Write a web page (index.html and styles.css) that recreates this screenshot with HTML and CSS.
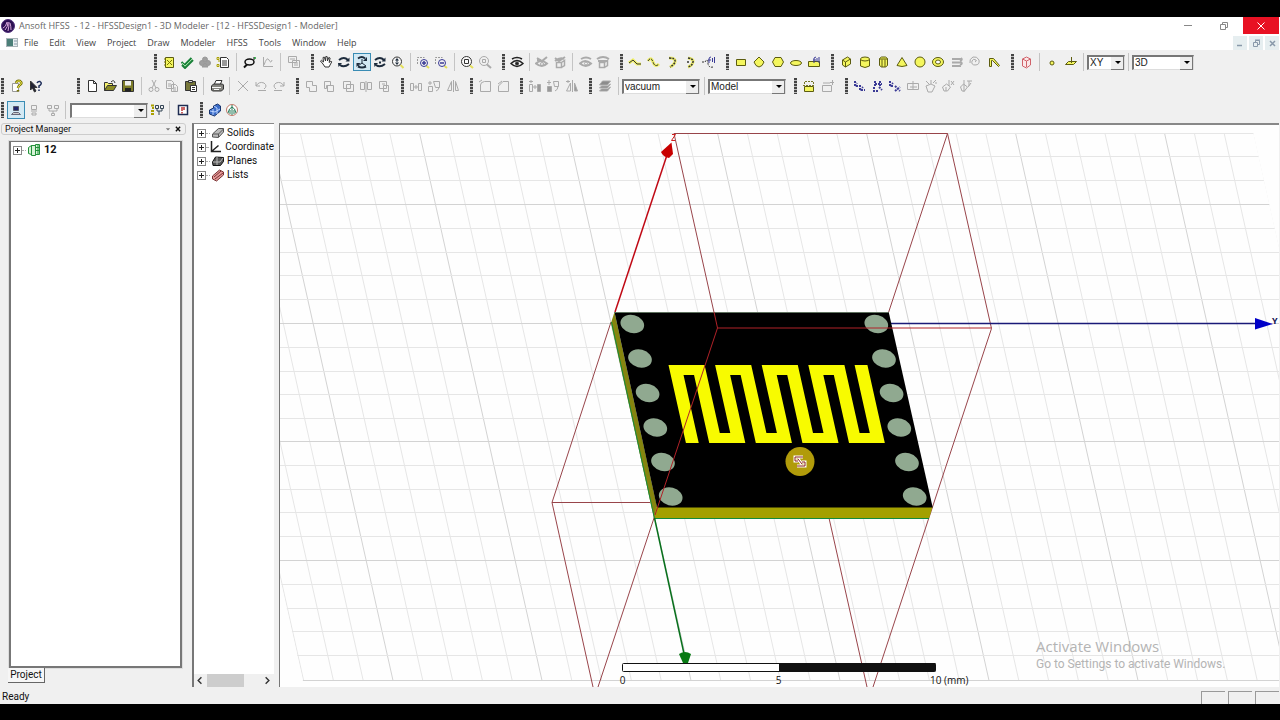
FILE: index.html
```html
<!DOCTYPE html>
<html lang="en">
<head>
<meta charset="utf-8">
<title>Ansoft HFSS</title>
<link rel="stylesheet" href="styles.css">
</head>
<body>
<div class="app">
  <header class="titlebar">
    <svg class="logo" viewBox="0 0 14 14"><circle cx="7" cy="7" r="6.500" fill="#2c1052" stroke="#52307c"/><path d="M2 9q3-1 4-6M4 11q3-3 3-8M7 12q1-4 1-9M10 11q0-4-1-7" stroke="#d9a8dc"/></svg>
    <h1>Ansoft HFSS&nbsp; - 12 - HFSSDesign1 - 3D Modeler - [12 - HFSSDesign1 - Modeler]</h1>
    <div class="winbtns">
      <button aria-label="Minimize"><svg viewBox="0 0 14 14"><path d="M2 6.500h8" stroke="#888"/></svg></button>
      <button aria-label="Restore"><svg viewBox="0 0 14 14"><path d="M2.500 5.500h5v5h-5zM4.500 5.500v-2h5v5h-2" stroke="#888"/></svg></button>
      <button class="close" aria-label="Close"><svg viewBox="0 0 14 14"><path d="M3.500 3.500l7 7M10.500 3.500l-7 7" stroke="#fff"/></svg></button>
    </div>
  </header>
  <nav class="menubar">
    <svg class="docicon" viewBox="0 0 14 14"><rect x="1.500" y="2.500" width="11" height="8" fill="#e8eef0" stroke="#a9b4b8"/><rect x="2" y="3" width="6" height="7" fill="#4b7f78" stroke="none"/><path d="M9 5h3M9 8h3" stroke="#89a"/></svg>
    <button>File</button><button>Edit</button><button>View</button><button>Project</button><button>Draw</button><button>Modeler</button><button>HFSS</button><button>Tools</button><button>Window</button><button>Help</button>
    <div class="mdibtns">
      <button aria-label="Minimize document"><svg viewBox="0 0 14 14"><path d="M4 9.500h5" stroke="#89a" stroke-width="1.500"/></svg></button>
      <button aria-label="Restore document"><svg viewBox="0 0 14 14"><path d="M4.500 6.500h4v4h-4zM6.500 6V4.500h4v4H9M6 4h5" stroke="#89a"/></svg></button>
      <button aria-label="Close document"><svg viewBox="0 0 14 14"><path d="M5 5l5 5M10 5l-5 5" stroke="#89a" stroke-width="1.500"/></svg></button>
    </div>
  </nav>

  <div class="bar row1">
    <div class="tools" role="toolbar" aria-label="HFSS">
      <i class="grip"></i>
      <button aria-label="Model"><svg viewBox="0 0 14 14"><path class="y" d="M3.500 2.500h8v10h-8z"/><path d="M5 5l5 5M10 5l-5 5M2 4h2M2 7h2M2 10h2" stroke="#777000"/></svg></button>
      <button aria-label="Validate"><svg viewBox="0 0 14 14"><path d="M1.500 7l3 3 7-7M2 10l3 3 8-8" stroke="#188038" stroke-width="2"/><path d="M2 8l3 3 7-7" stroke="#9ce0a0"/></svg></button>
      <button aria-label="Analyze all"><svg viewBox="0 0 14 14"><g fill="#a0a0a0" stroke="#999"><circle cx="7" cy="4.500" r="2.500"/><circle cx="4" cy="8" r="2.500"/><circle cx="10" cy="8" r="2.500"/><path d="M4 12h6l-3-4z"/></g></svg></button>
      <button aria-label="Notes"><svg viewBox="0 0 14 14"><path d="M4.500 2.500h6l2 2v8h-8z" fill="#fff"/><path d="M6 6h5M6 8h5M6 10h5"/><path d="M1 2.500h2v2H1zM2 6h2M1 9.500h2v2H1z" stroke="#aaa000"/></svg></button>
      <i class="sep"></i>
      <button aria-label="Solution data"><svg viewBox="0 0 14 14"><ellipse cx="6.500" cy="7" rx="4.500" ry="3" stroke="#111" stroke-width="1.500" fill="#eee"/><path d="M1 12.500l3-3" stroke="#111" stroke-width="2"/><path d="M11 2v3" stroke="#111"/><circle cx="12" cy="3" r="1" fill="#19a030" stroke="none"/></svg></button>
      <button aria-label="Report" class="off"><svg viewBox="0 0 14 14"><path d="M2.500 2v9.500H12M3 10q3-9 5-5t3 0"/></svg></button>
      <i class="sep"></i>
      <button aria-label="Copy image" class="off"><svg viewBox="0 0 14 14"><path d="M1.500 1.500h8v6h-8zM5.500 5.500h7v7h-7zM3 4h5M7 8h4M7 10h4"/></svg></button>
    </div>
    <div class="tools" role="toolbar" aria-label="View">
      <i class="grip"></i>
      <button aria-label="Pan"><svg viewBox="0 0 14 14"><path d="M4 9L1.500 6l1-.7L4.500 7 4 2.500l1.300-.4L6.500 6l.3-4.500 1.400.2L8.500 6l1.300-3.500 1.300.5-1 4.500 1.800-1.500.8.900L10 12H6z" fill="#fff"/></svg></button>
      <button aria-label="Rotate about model"><svg viewBox="0 0 14 14"><path class="rot" d="M2 5q5-4 9 0M3 10q4 3 9-1"/><path class="arw" d="M12.500 2.500v4h-4zM1 8l4 0-3.500 4z"/></svg></button>
      <button aria-label="Rotate about axis" class="on"><svg viewBox="0 0 14 14"><path class="rot" d="M3 3.500q4-3 7 0M3 11.500q4 2 8 0"/><path d="M7 4v4M7 8l-4 3M7 8l4 3" stroke="#1d2b3c"/><path class="arw" d="M12 2v4H8zM1.500 8h4l-4 4z"/></svg></button>
      <button aria-label="Rotate about screen"><svg viewBox="0 0 14 14"><path class="rot" d="M2 5q5-4 9 0M3 10q4 3 9-1"/><path class="arw" d="M12.500 2.500v4h-4zM1 8l4 0-3.500 4zM6 6.500h2v2H6z"/></svg></button>
      <button aria-label="Zoom dynamic"><svg viewBox="0 0 14 14"><path class="hand" d="M9.500 10l3 3"/><circle cx="6" cy="6.500" r="4.500" fill="#f8f8f8"/><path class="arw" d="M6 3l2 2.500H4zM6 10l2-2.500H4zM5.500 5h1v3h-1z"/></svg></button>
      <i class="sep"></i>
      <button aria-label="Zoom in"><svg viewBox="0 0 14 14"><path d="M1.500 9V2.500h7" stroke="#999" stroke-dasharray="2 1"/><path class="hand" d="M10.500 11l2.500 2"/><circle class="bl" cx="8" cy="8" r="3.500"/><path class="bl" d="M6 8h4M8 6v4" stroke-width="1.500"/></svg></button>
      <button aria-label="Zoom out"><svg viewBox="0 0 14 14"><path d="M1.500 9V2.500h7" stroke="#999" stroke-dasharray="2 1"/><path class="hand" d="M10.500 11l2.500 2"/><circle class="bl" cx="8" cy="8" r="3.500"/><path class="bl" d="M6 8h4" stroke-width="1.500"/></svg></button>
      <i class="sep"></i>
      <button aria-label="Fit all"><svg viewBox="0 0 14 14"><path class="hand" d="M10 10.500l3 2.500"/><circle cx="6.500" cy="6.500" r="5" fill="#fafafa"/><path d="M4.500 4.500h4v4h-4z"/></svg></button>
      <button aria-label="Fit selection" class="off"><svg viewBox="0 0 14 14"><path d="M9 9.500l4 3.500" stroke-width="2"/><circle cx="6" cy="6" r="4.500"/><path d="M4.500 4.500h3v3h-3z"/></svg></button>
    </div>
    <div class="tools" role="toolbar" aria-label="Visibility">
      <i class="grip"></i>
      <button aria-label="Show or hide"><svg viewBox="0 0 14 14"><path d="M1 8.500q6-6 12 0-6 6-12 0zM2 4q5-3 10 0" stroke="#222" stroke-width="1.500"/><circle cx="7" cy="8.500" r="1.500" fill="#222"/></svg></button>
      <i class="sep"></i>
      <button aria-label="Hide selection" class="off"><svg viewBox="0 0 14 14"><path d="M1 8.500q5-5 11 0-5 5-11 0zM2 3l5 3 5-4M2 5h4" stroke-width="2"/><circle cx="7" cy="9" r="1.500"/></svg></button>
      <button aria-label="Show selection" class="off"><svg viewBox="0 0 14 14"><path d="M2 6q5-4 9-2M2 3l4 3 6-4" stroke-width="2"/><path d="M3.500 7.500h5v5h-5zM8.500 7.500l3-2v5l-3 2" stroke-width="1.500"/></svg></button>
      <i class="sep"></i>
      <button aria-label="Hide in active view" class="off"><svg viewBox="0 0 14 14"><path d="M1 8.500q5-5 11 0-5 5-11 0zM2 4q5-3 10 0" stroke-width="2"/><circle cx="7" cy="8.500" r="1.500"/></svg></button>
      <button aria-label="Show in active view" class="off"><svg viewBox="0 0 14 14"><path d="M1 4q6-4 12 0M2 6h9" stroke-width="2"/><path d="M3.500 7.500h5v5h-5zM8.500 7.500l3-2v5l-3 2" stroke-width="1.500"/></svg></button>
    </div>
    <div class="tools" role="toolbar" aria-label="Draw curves">
      <i class="grip"></i>
      <button aria-label="Line"><svg viewBox="0 0 14 14"><path class="glow" d="M1 8l4-3 4 4h4"/><path d="M1 8l4-3 4 4h4"/></svg></button>
      <button aria-label="Spline"><svg viewBox="0 0 14 14"><path class="glow" d="M1 6q3-5 5 1t6 2"/><path d="M1 6q3-5 5 1t6 2" stroke-dasharray="3 1"/></svg></button>
      <button aria-label="Arc three point"><svg viewBox="0 0 14 14"><path class="glow" d="M4 3q7 0 6 4-1 3-5 5"/><path d="M4 3q7 0 6 4-1 3-5 5" stroke-width="1.500" stroke-dasharray="2 1"/></svg></button>
      <button aria-label="Arc centre point"><svg viewBox="0 0 14 14"><path class="glow" d="M5 3q6 1 5 4-1 4-5 5"/><path d="M5 3q6 1 5 4-1 4-5 5M4 7h2" stroke-width="1.500" stroke-dasharray="2 1"/></svg></button>
      <button aria-label="Equation curve"><svg viewBox="0 0 14 14"><path d="M0 7h3q3-5 3 2 1 4 5 3" stroke-dasharray="2 1"/><path class="bl" d="M7 8V4q0-2 2-2M6 5h3M12.500 2v6M10.500 3v4"/></svg></button>
    </div>
    <div class="tools" role="toolbar" aria-label="Draw sheets">
      <i class="grip"></i>
      <button aria-label="Rectangle"><svg viewBox="0 0 14 14"><path class="y" d="M2.500 4.500h9v6h-9z"/></svg></button>
      <button aria-label="Ellipse"><svg viewBox="0 0 14 14"><path class="y" d="M7 2l5 5-2 3.500-3 1.500-3-1.500L2 7z"/></svg></button>
      <button aria-label="Polygon"><svg viewBox="0 0 14 14"><path class="y" d="M4 2.500h6l2.500 4.500L10 11.500H4L1.500 7z"/></svg></button>
      <button aria-label="Flat ellipse"><svg viewBox="0 0 14 14"><ellipse class="y" cx="7" cy="8" rx="5.500" ry="2.500"/></svg></button>
      <button aria-label="Equation surface"><svg viewBox="0 0 14 14"><path class="y" d="M1.500 6.500h11v5h-11z"/><path class="bl" d="M7 8V3l2-1M6 5h3M12 2v6M10 3v4"/></svg></button>
    </div>
    <div class="tools" role="toolbar" aria-label="Draw solids">
      <i class="grip"></i>
      <button aria-label="Box"><svg viewBox="0 0 14 14"><path class="y" d="M3.500 5l5-3 3 2v5l-5 3-3-2zM3.500 5l3 2v5M6.500 7l5-3"/></svg></button>
      <button aria-label="Cylinder"><svg viewBox="0 0 14 14"><path class="y" d="M2.500 4v7q4.500 3 9 0V4"/><ellipse class="y" cx="7" cy="4" rx="4.500" ry="2"/></svg></button>
      <button aria-label="Regular polyhedron"><svg viewBox="0 0 14 14"><path class="y" d="M3.500 3.500l2-1.500h4l2 1.500v7l-2 1.500h-4l-2-1.500zM3.500 4h8M6 4.500V12M9 4.500V12"/></svg></button>
      <button aria-label="Cone"><svg viewBox="0 0 14 14"><path class="y" d="M7 2.500L2 10.500q5 2 10 0z"/></svg></button>
      <button aria-label="Sphere"><svg viewBox="0 0 14 14"><circle class="y" cx="7" cy="7" r="5"/></svg></button>
      <button aria-label="Torus"><svg viewBox="0 0 14 14"><ellipse class="y" cx="7" cy="7" rx="5.500" ry="4.500"/><ellipse cx="7" cy="7" rx="2.500" ry="2" fill="#fff" stroke="#5c5c10"/></svg></button>
      <button aria-label="Helix" class="off"><svg viewBox="0 0 14 14"><path d="M2 4h9M2 7.500h9M2 11h9M11 3q2 2-1 3M11 7q2 2-1 3" stroke-width="2"/></svg></button>
      <button aria-label="Spiral" class="off"><svg viewBox="0 0 14 14"><path d="M7 7q2-1 1-2-3-2-4 1-1 4 3 4 5 0 4-5-2-4-6-3-4 2-3 6"/></svg></button>
      <button aria-label="Bondwire"><svg viewBox="0 0 14 14"><path class="y" d="M2.500 11.500v-8h4l6 7-1 1-6-6h-1v6z"/></svg></button>
    </div>
    <div class="tools" role="toolbar" aria-label="Plane and mode">
      <i class="grip"></i>
      <button aria-label="Non-model box"><svg viewBox="0 0 14 14"><path d="M3.500 4l4-2 4 2v6l-4 3-4-2zM3.500 4l4 2v6M7.500 6l4-2" stroke="#d0626a" fill="#fae8e8"/></svg></button>
      <i class="sep"></i>
      <button aria-label="Point"><svg viewBox="0 0 14 14"><circle class="y" cx="7" cy="8" r="2"/></svg></button>
      <button aria-label="Plane"><svg viewBox="0 0 14 14"><path class="y" d="M1.500 9.500l3-3h8l-3 3zM7.500 2v6"/></svg></button>
      <i class="sep"></i>
      <span class="combo xy"><select aria-label="Drawing plane"><option>XY</option></select></span>
      <i class="sep"></i>
      <span class="combo mode"><select aria-label="Movement mode"><option>3D</option></select></span>
    </div>
  </div>

  <div class="bar row2">
    <div class="tools help" role="toolbar" aria-label="Help">
      <i class="grip"></i>
      <button aria-label="Help topics"><svg viewBox="0 0 14 14"><path d="M2.500 4.500h6v8h-6z" fill="#fff" stroke="#999"/><path d="M6 4q1-3 4-2 3 2 0 4-2 1-2 3M8 11v1.500" stroke="#77730a" stroke-width="2.500"/><path d="M6 4q1-3 4-2 3 2 0 4-2 1-2 3" stroke="#f3ed4a"/></svg></button>
      <button aria-label="Context help"><svg viewBox="0 0 14 14"><path d="M1.500 2v9l2-2 2 4 1.500-1-2-3.500h3z" fill="#223"/><path d="M8 4q1-2 3-1.500 3 2-1 4.500v2M10 10.500V12" stroke="#1d2c58" stroke-width="1.500"/></svg></button>
    </div>
    <div class="tools" role="toolbar" aria-label="Standard">
      <i class="grip"></i>
      <button aria-label="New"><svg viewBox="0 0 14 14"><path d="M3.500 1.500h5l3 3v8h-8zM8.500 1.500v3h3" fill="#fff"/></svg></button>
      <button aria-label="Open"><svg viewBox="0 0 14 14"><path d="M1.500 11.500v-8h3l1 1h4v2" fill="#f4f06c"/><path d="M1.500 11.500l3-5h9l-3 5z" fill="#8c8c24"/><path d="M8 3q3-3 4 1"/></svg></button>
      <button aria-label="Save"><svg viewBox="0 0 14 14"><path d="M1.500 1.500h11v11h-11z" fill="#7b7b28"/><path d="M4 2h6v4.500H4z" fill="#eee" stroke="none"/><path d="M4 9h6v3.500H4z" fill="#222" stroke="none"/></svg></button>
      <i class="sep"></i>
      <button aria-label="Cut" class="off"><svg viewBox="0 0 14 14"><path d="M5 1l4 8M9 1L5 9"/><circle cx="4" cy="10.500" r="2"/><circle cx="10" cy="10.500" r="2"/></svg></button>
      <button aria-label="Copy" class="off"><svg viewBox="0 0 14 14"><path d="M1.500 1.500h5l2 2v6h-7zM6.500 5.500h4l2 2v5h-6zM3 5h3M3 7h3M8 9h3M8 11h3"/></svg></button>
      <button aria-label="Paste"><svg viewBox="0 0 14 14"><path d="M1.500 2.500h10v9h-10z" fill="#77773a"/><path d="M4.500 1.500h4v2h-4z" fill="#ddd"/><path d="M6.500 6.500h6v6h-6z" fill="#fff"/><path d="M8 8.500h3M8 10.500h3"/></svg></button>
      <i class="sep"></i>
      <button aria-label="Print"><svg viewBox="0 0 14 14"><path d="M4 6l2-4.500h6L10 6" fill="#fff"/><path d="M1.500 7l2-2h9l1 1v4l-2 2h-9l-1-1z" fill="#858580"/><path d="M2 8.500h9M4 10.500h5" stroke="#f8f8f8"/></svg></button>
      <i class="sep"></i>
      <button aria-label="Delete" class="off"><svg viewBox="0 0 14 14"><path d="M2 2l10 10M12 2L2 12"/></svg></button>
      <button aria-label="Undo" class="off"><svg viewBox="0 0 14 14"><path d="M2 3v4h4M2 7q3-5 8-3 4 3 0 6M4 11.500h8"/></svg></button>
      <button aria-label="Redo" class="off"><svg viewBox="0 0 14 14"><path d="M12 3v4H8M12 7Q9 2 4 4q-4 3 0 6M2 11.500h8"/></svg></button>
    </div>
    <div class="tools off" role="toolbar" aria-label="Boolean">
      <i class="grip"></i>
      <button aria-label="Unite"><svg viewBox="0 0 14 14"><path d="M2.500 2.500h6v4h4v6h-7v-4h-3z"/></svg></button>
      <button aria-label="Subtract"><svg viewBox="0 0 14 14"><path d="M2.500 2.500h6v4h-4v3h-2zM5.500 6.500h6v6h-6z"/></svg></button>
      <button aria-label="Intersect"><svg viewBox="0 0 14 14"><path d="M2.500 2.500h7v7h-7zM5.500 5.500h7v7h-7z"/></svg></button>
      <button aria-label="Split"><svg viewBox="0 0 14 14"><path d="M1.500 3.500h4v7h-4zM8.500 3.500h4v7h-4zM7 2v11"/></svg></button>
      <button aria-label="Imprint"><svg viewBox="0 0 14 14"><path d="M2.500 2.500h7v7h-7zM6.500 6.500h5v6h-5zM5 5h3"/></svg></button>
    </div>
    <div class="tools off" role="toolbar" aria-label="Arrange">
      <i class="grip"></i>
      <button aria-label="Move"><svg viewBox="0 0 14 14"><path d="M1.500 4.500h3v7h-3zM9.500 4.500h3v7h-3zM5 8h4M7 6v4"/></svg></button>
      <button aria-label="Rotate"><svg viewBox="0 0 14 14"><path d="M1.500 7.500h4v5h-4zM6.500 2.500h6v6h-4zM1 4h4M3 2v4M9 12q3-1 3-4"/></svg></button>
      <button aria-label="Mirror"><svg viewBox="0 0 14 14"><path d="M5.500 2.500v9h-4zM9.500 2.500v9h3zM7.500 1v12"/></svg></button>
    </div>
    <div class="tools off" role="toolbar" aria-label="Fillet">
      <i class="grip"></i>
      <button aria-label="Fillet"><svg viewBox="0 0 14 14"><path d="M2.500 12.500V6q0-3 4-3.500h6v10zM1 3l3-2"/></svg></button>
      <button aria-label="Chamfer"><svg viewBox="0 0 14 14"><path d="M2.500 12.500V7L7 2.500h5.500v10zM2 5l4-3"/></svg></button>
    </div>
    <div class="tools off" role="toolbar" aria-label="Duplicate">
      <i class="grip"></i>
      <button aria-label="Duplicate along line"><svg viewBox="0 0 14 14"><path d="M1.500 5.500h3v7h-3zM5 8h4M7 6v4M1 2.500h4M3 1v3"/><path d="M9.500 5.500h3v7h-3z" fill="#999"/></svg></button>
      <button aria-label="Duplicate around axis"><svg viewBox="0 0 14 14"><path d="M1.500 7.500h4v5h-4z" fill="#999"/><path d="M7.500 2.500h5v5h-4zM1 3.500h4M3 1v5M9 12q3-1 3-5"/></svg></button>
      <button aria-label="Duplicate mirror"><svg viewBox="0 0 14 14"><path d="M5.500 4v8h-4zM7.500 1v12M1 2.500h4M3 1v3"/><path d="M9.500 4v8h3z" fill="#999"/></svg></button>
    </div>
    <div class="tools" role="toolbar" aria-label="Material">
      <i class="grip"></i>
      <button aria-label="Layers" class="off"><svg viewBox="0 0 14 14"><path d="M1.500 6l3-4h8l-3 4zM1.500 9l2-2h6l3-2-3 4zM1.500 12l2-2h6l3-2-3 4z" fill="#8c8c8c"/></svg></button>
      <i class="sep"></i>
      <span class="combo mat"><select aria-label="Material"><option>vacuum</option></select></span>
      <i class="sep"></i>
      <span class="combo mat"><select aria-label="Model type"><option>Model</option></select></span>
    </div>
    <div class="tools" role="toolbar" aria-label="Sheets">
      <i class="grip"></i>
      <button aria-label="Cover lines"><svg viewBox="0 0 14 14"><path d="M1 6.500h12M2.500 5V2.500h9V5" stroke="#77772a" stroke-dasharray="2 1"/><path class="y" d="M2.500 7.500h9v5h-9z"/></svg></button>
      <button aria-label="Add section" class="off"><svg viewBox="0 0 14 14"><path d="M1.500 6.500h9v6h-9zM2 4h7M9 3.500h4M11.500 1v5"/></svg></button>
    </div>
    <div class="tools" role="toolbar" aria-label="Coordinate systems">
      <i class="grip"></i>
      <button aria-label="Offset system"><svg viewBox="0 0 14 14"><path class="cs" d="M2 2v5h4M2 7l2-3M7 6v5h5M7 11l3-3"/></svg></button>
      <button aria-label="Rotated system"><svg viewBox="0 0 14 14"><path class="cs" d="M4 5h7M4 2v5M9 2v5M3 8v4h4M8 8l3 3"/></svg></button>
      <button aria-label="Both"><svg viewBox="0 0 14 14"><path class="cs" d="M2 2v5h4M2 7l3-3M7 7l5 5M7 12l5-4"/></svg></button>
      <button aria-label="Face system" class="off"><svg viewBox="0 0 14 14"><path d="M1.500 4.500h11v6h-11zM7 2v8M4 8h7"/></svg></button>
      <button aria-label="Object system" class="off"><svg viewBox="0 0 14 14"><path d="M2 7l5-2 4 2-3 6H4zM2 2l3 3M7 1v4M12 1L9 4M11 4h2"/></svg></button>
      <button aria-label="Edge system" class="off"><svg viewBox="0 0 14 14"><path d="M1.500 8l4-3 4 3-3 4H3zM8 1v6M10 2l3 4M13 2l-3 4M5 12V8"/></svg></button>
      <button aria-label="Vertex system" class="off"><svg viewBox="0 0 14 14"><path d="M1.500 8l3-3 4 3-3 4H3zM5 1v12M8 2h5M10 2v5M12 4l-3 4"/></svg></button>
    </div>
  </div>

  <div class="bar row3">
    <div class="tools" role="toolbar" aria-label="Simulation">
      <i class="grip"></i>
      <button aria-label="Local machine" class="on"><svg viewBox="0 0 14 14"><path d="M4.500 3.500h5v4h-5z" fill="#20266e" stroke="#556"/><path d="M2.500 11.500h9l-2-2h-5z" fill="#ccc" stroke="#667"/></svg></button>
      <button aria-label="Remote machine" class="off"><svg viewBox="0 0 14 14"><path d="M4.500 2.500h5v4h-5zM4 8h6M5 10h4v2H5z"/></svg></button>
      <button aria-label="Distributed" class="off"><svg viewBox="0 0 14 14"><path d="M1.500 2.500h4v3h-4zM8.500 2.500h4v3h-4zM3 6v2h8V6M7 8v2M5.500 10.500h3v2h-3z"/></svg></button>
      <i class="sep"></i>
      <span class="combo mat"><select aria-label="Configuration"><option></option></select></span>
      <button aria-label="Edit configurations"><svg viewBox="0 0 14 14"><path d="M1 2.500h3M2 5h2M1 8h3M1 11h3" stroke="#aaa000" stroke-width="2"/><path d="M5.500 2.500h3v3h-3zM10.500 2.500h3v3h-3zM7 6v2h5V6M9 8v4" stroke="#345"/></svg></button>
      <i class="sep"></i>
      <button aria-label="Job status"><svg viewBox="0 0 14 14"><path d="M2.500 2.500h9v9h-9z" fill="#fff" stroke="#1e2c52" stroke-width="1.500"/><path d="M6 4v4M6 9v1.500M8 4v3" stroke="#b33" stroke-width="1.500"/></svg></button>
    </div>
    <div class="tools" role="toolbar" aria-label="Boundaries">
      <i class="grip"></i>
      <button aria-label="Mesh"><svg viewBox="0 0 14 14"><path d="M1.500 7l4-2V3l4-2 3 2v5l-6 5-5-2z" fill="#3a6cc8" stroke="#19346c"/><path d="M2 8l5 1 5-3M6 3l3 2v6M5 6v6" stroke="#bcd4ff"/></svg></button>
      <button aria-label="Radiation"><svg viewBox="0 0 14 14"><circle cx="7" cy="7" r="5.500" stroke="#c07868" fill="#fff"/><path d="M7 2v10M7 4q-3 1-4 6M7 4q3 1 4 6M5 7v4M9 7v4" stroke="#247a58"/></svg></button>
    </div>
  </div>

  <main class="work">
    <aside class="manager">
      <h2>Project Manager
        <span class="dockbtns">
          <button aria-label="Panel options"><svg viewBox="0 0 14 14"><path d="M4 6h6L7 9z" fill="#777" stroke="none"/></svg></button>
          <button aria-label="Close panel"><svg viewBox="0 0 14 14"><path d="M4 4l6 6M10 4l-6 6" stroke="#111" stroke-width="2"/></svg></button>
        </span>
      </h2>
      <div class="sheet">
        <div class="node">
          <button class="exp" aria-label="Expand 12"></button><i class="dots"></i>
          <svg class="nodeicon" viewBox="0 0 14 14"><path d="M1.500 4.500l3-2v9l-3-1zM4.500 2.500h4v10h-4zM8.500 1.500h4v10h-4z" fill="#d8f2d8" stroke="#23913a"/><path d="M9 4.500h4M9 7.500h4M11 2v9" stroke="#23913a"/></svg>
          <b>12</b>
        </div>
      </div>
      <button class="tab">Project</button>
    </aside>

    <section class="model">
      <ul>
        <li><button class="exp" aria-label="Expand Solids"></button><i class="dots"></i><svg class="nodeicon" viewBox="0 0 14 14"><path d="M1.500 11V8l6-5.500h5V6l-5 5.500z" fill="#bbb" stroke="#555"/><path d="M2 8h5.500l5-5M7.500 8v3" stroke="#555"/></svg><span>Solids</span></li>
        <li><button class="exp" aria-label="Expand Coordinate"></button><i class="dots"></i><svg class="nodeicon" viewBox="0 0 14 14"><path d="M2.500 1v10.500H12M2.500 11.500l7-6" stroke="#222" stroke-width="1.500"/></svg><span>Coordinate</span></li>
        <li><button class="exp" aria-label="Expand Planes"></button><i class="dots"></i><svg class="nodeicon" viewBox="0 0 14 14"><path d="M1.500 8l3-5 8 .5v4l-3 4H2z" fill="#555" stroke="#111"/><path d="M2 8h7l3-4M6 3v8" stroke="#bbb"/></svg><span>Planes</span></li>
        <li><button class="exp" aria-label="Expand Lists"></button><i class="dots"></i><svg class="nodeicon" viewBox="0 0 14 14"><path d="M1.500 8l7-6 4 2v3l-7 6-4-2z" fill="#e59898" stroke="#733"/><path d="M3 9l7-6M4 11l8-6" stroke="#733"/></svg><span>Lists</span></li>
      </ul>
      <div class="hscroll">
        <button aria-label="Scroll left"><svg viewBox="0 0 14 14"><path d="M8 3.500L4.500 7 8 10.500" stroke="#333" stroke-width="1.500"/></svg></button>
        <i class="thumb"></i>
        <button aria-label="Scroll right"><svg viewBox="0 0 14 14"><path d="M5 3.500L8.500 7 5 10.500" stroke="#333" stroke-width="1.500"/></svg></button>
      </div>
    </section>

    <section class="view">
      <svg class="scene" viewBox="280 125 999 562" preserveAspectRatio="xMidYMid slice" role="img" aria-label="3D model of a meander antenna">
        <defs>
          <clipPath id="ground"><path d="M180 132H1253L1376 681H303z"/></clipPath>
          <g id="cols">
            <path class="minor" d="M29.800 0l122.400 547M59.600 0l122.400 547M89.400 0l122.400 547M119.200 0l122.400 547"/>
            <path class="major" d="M0 0l122.400 547"/>
          </g>
          <g id="rows">
            <path class="minor" d="M180 24H1380M180 48H1380M180 71H1380M180 95H1380"/>
            <path class="major" d="M180 0H1380"/>
          </g>
        </defs>
        <g clip-path="url(#ground)">
          <use href="#cols" x="121.500" y="133"/><use href="#cols" x="270.500" y="133"/><use href="#cols" x="419.500" y="133"/><use href="#cols" x="568.500" y="133"/><use href="#cols" x="717.500" y="133"/><use href="#cols" x="866.500" y="133"/><use href="#cols" x="1015.500" y="133"/><use href="#cols" x="1164.500" y="133"/>
          <use href="#rows" y="85.500"/><use href="#rows" y="204.500"/><use href="#rows" y="323.500"/><use href="#rows" y="441.500"/><use href="#rows" y="560.500"/><use href="#rows" y="680.500"/>
        </g>
        <path class="box" d="M674 133.500H947.500L991.500 328.500 873 687M947.500 133.500L888.700 312M829 518L867 687M674 133.500L717.500 328M611 322L552 502.500 593 687M552 502.500H650M655 515L598 687"/>
        <path d="M889 323.500H1257" stroke="#1a1a78" stroke-width="1.500"/>
        <path d="M1255 318v11.500L1273 324z" fill="#0000c8"/>
        <path d="M615 312L668 152" stroke="#c00814" stroke-width="1.500"/>
        <path d="M671.500 142.500L661 152q2 5 8 6l4-4z" fill="#c80000"/>
        <path d="M672 134.500h3.500l-4 6h3.500" stroke="#d02020"/>
        <path d="M614.500 312L611 323 654 518.500 657 507z" fill="#85850f"/>
        <path d="M656 507H932.500L929 518.500H654z" fill="#a3a000"/>
        <path d="M611.500 322L654.500 518.500H929" stroke="#148a3c"/>
        <path d="M614.500 312H888.700L932.700 507.500H657z" fill="#000"/>
        <path d="M614.500 312.500H888.700" stroke="#5d705d"/>
        <g fill="#90a990">
          <ellipse id="pad" cx="632.300" cy="324" rx="12" ry="9" transform="rotate(14 632.300 324)"/>
          <use href="#pad" x="7.700" y="34.500"/><use href="#pad" x="15.300" y="69"/><use href="#pad" x="23" y="103.500"/><use href="#pad" x="30.700" y="138"/><use href="#pad" x="38.400" y="172.500"/>
          <use href="#pad" x="244" y="0"/><use href="#pad" x="251.700" y="34.500"/><use href="#pad" x="259.300" y="69"/><use href="#pad" x="267" y="103.500"/><use href="#pad" x="274.700" y="138"/><use href="#pad" x="282.400" y="172.500"/>
        </g>
        <g transform="translate(668.500 365) skewX(12.600)" stroke="#f8fb00">
          <path stroke-width="12.800" d="M6.400 0v78M29.700 0v78M53 0v78M76.300 0v78M99.600 0v78M122.900 0v78M146.200 0v78M169.500 0v78M192.500 0v78"/>
          <path stroke-width="10" d="M6 5h24M53 5h23M100 5h23M146 5h23M30 73h23M76 73h24M123 73h23M170 73h23"/>
        </g>
        <path d="M655 515L717.500 328H991.500M717.500 328L714 312" stroke="#b02228"/>
        <circle cx="800" cy="461.500" r="14.500" fill="#b19b0a"/>
        <path d="M803 457h-8v4h3M797 466h8v-4h-3M798 459l4 5" stroke="#fff" stroke-width="3"/>
        <path d="M803 457h-8v4h3M797 466h8v-4h-3M798 459l4 5" stroke="#8a2020"/>
        <path d="M654.500 518L684.500 656" stroke="#08701c" stroke-width="1.500"/>
        <path d="M679 654q6-4 12 0L688 663h-5z" fill="#087a14"/>
        <rect x="622.500" y="663.500" width="313" height="8" rx="1" fill="#fff" stroke="#111"/>
        <path d="M779 663h156.500v8.500H779z" fill="#111"/>
        <text x="622.500" y="684" text-anchor="middle">0</text><text x="778.500" y="684" text-anchor="middle">5</text><text x="930" y="684">10 (mm)</text>
        <text class="axis" x="1272" y="324">Y</text>
      </svg>
      <div class="watermark"><strong>Activate Windows</strong><span>Go to Settings to activate Windows.</span></div>
    </section>
  </main>
  <footer class="status"><span>Ready</span><i></i><i></i><i></i></footer>
</div>
</body>
</html>
```
FILE: styles.css
```css
* { box-sizing: border-box; }
body {
  margin: 0;
  height: 100vh;
  padding: 17px 0 16px;
  background: #000;
  color: #222;
  font: 10px/14px Roboto, "Noto Sans", sans-serif;
}
button {
  border: 0;
  padding: 0;
  background: none;
  font: inherit;
  color: inherit;
}
svg { display: block; fill: none; stroke: #333; }
.app { height: 100%; display: flex; flex-direction: column; background: #f0f0f0; }

.titlebar { display: flex; align-items: center; height: 18px; background: #fff; padding: 0 1px; }
.logo { width: 14px; height: 14px; }
.titlebar h1 { margin: 0 0 0 4px; flex: 1; font: 400 9px/18px "Open Sans", sans-serif; color: #666; white-space: nowrap; }
.winbtns { display: flex; height: 18px; }
.winbtns button { width: 36px; display: grid; place-items: center; }
.winbtns svg { width: 14px; height: 14px; }
.winbtns .close { background: #e81123; height: 17px; }

.menubar { display: flex; align-items: center; height: 15px; padding: 1px 0 0 5px; background: #fff; color: #444; }
.menubar > button { margin-left: 11px; font: 9px/14px "Open Sans", sans-serif; }
.menubar > .docicon + button { margin-left: 5px; }
.docicon { width: 14px; height: 14px; }
.mdibtns { display: flex; gap: 2px; margin-left: auto; padding-right: 1px; }
.mdibtns button { width: 14px; height: 14px; background: #e6eef0; }

.bar { display: grid; height: 24px; flex: none; }
.row1 { grid-template-columns: 157px 191px 118px 106px 105px 180px 186px; padding-left: 154px; }
.row2 { grid-template-columns: 76px 219px 105px 69px 50px 69px 205px 51px 138px; padding-left: 1px; }
.row3 { grid-template-columns: 199px 48px; padding-left: 1px; }
.tools { display: flex; align-items: center; padding-right: 8px; min-width: 0; }
.row1 .tools:last-child { padding-right: 3px; }
.row1 .tools:last-child .sep { width: 7px; }
.help { padding-right: 32px; }
.grip {
  flex: none;
  width: 3px;
  height: 16px;
  margin-right: 3px;
  background: repeating-linear-gradient(#444 0 2px, #bbb 2px 3px);
}
.sep { flex: none; width: 8px; height: 18px; background: linear-gradient(#c4c4c4, #c4c4c4) center / 1px 100% no-repeat; }
.tools button { flex: 1 1 18px; height: 18px; display: grid; place-items: center; }
.tools svg { width: 14px; height: 14px; }
.tools .on { background: #d3e9f4; outline: 1px solid #3a8cb4; outline-offset: -1px; }
.off svg { stroke: #aaa; }
.y { fill: #f4f65e; stroke: #5c5c10; }
.bl { stroke: #3b3b96; }
.cs { stroke: #3b3b96; stroke-width: 2; stroke-dasharray: 2 1; }
.rot { stroke: #1d2b3c; stroke-width: 2; }
.arw { fill: #1d2b3c; stroke: none; }
.hand { stroke: #e5e05a; stroke-width: 2; }
.glow { stroke: #f1f16a; stroke-width: 3; }

.combo { position: relative; flex: none; height: 15px; border: 1px solid #ddd; border-top: 2px solid #777; border-left: 2px solid #777; background: #fff; }
.combo::before { content: ""; position: absolute; right: 0; top: 0; width: 12px; height: 12px; background: #eee; border-right: 1px solid #777; border-bottom: 1px solid #777; pointer-events: none; }
.combo::after { content: ""; position: absolute; right: 3px; top: 4px; border: 3px solid transparent; border-top-color: #000; pointer-events: none; }
.combo select { appearance: none; display: block; width: 100%; height: 12px; border: 0; padding: 0 13px 0 1px; background: #fff; color: #222; font: 10px/12px "Liberation Sans", Arial, sans-serif; }
.mat { width: 78px; }
.xy { width: 38px; }
.mode { width: 62px; }

.work { flex: 1; min-height: 0; display: grid; grid-template-columns: 186px 82px 1fr; column-gap: 5px; padding: 1px 1px 0 1px; color: #111; }
.manager { display: flex; flex-direction: column; align-items: flex-start; min-height: 0; padding-bottom: 4px; }
.manager h2 { display: flex; justify-content: space-between; align-items: center; width: 185px; height: 12px; margin: 0 0 6px; padding: 0 2px 0 3px; border: 1px solid #ccc; border-radius: 3px; font-size: 9px; font-weight: 400; line-height: 10px; }
.dockbtns { display: flex; }
.dockbtns svg { width: 10px; height: 10px; }
.sheet { flex: 1; width: 173px; margin-left: 8px; border: 2px solid #777; border-top-width: 1px; background: #fff; outline: 1px solid #ddd; }
.node { display: flex; align-items: center; padding: 1px 0 0 3px; font-size: 11px; }
.tab { width: 37px; height: 15px; margin-left: 7px; background: #f6f6f6; border: solid #666; border-width: 0 1px 1px 0; line-height: 14px; color: #111; }
.exp {
  width: 7px;
  height: 7px;
  flex: none;
  outline: 1px solid #888;
  background: linear-gradient(#222, #222) center / 5px 1px no-repeat, linear-gradient(#222, #222) center / 1px 5px no-repeat, #fff;
}
.dots { width: 4px; margin: 0 1px; border-top: 1px dotted #aaa; }
.nodeicon { width: 14px; height: 14px; flex: none; margin-right: 3px; }

.model { display: flex; flex-direction: column; border-left: 2px solid #777; border-top: 1px solid #888; background: #fff; overflow: hidden; }
.model ul { flex: 1; list-style: none; margin: 0; padding: 2px 0 0 4px; }
.model li { display: flex; align-items: center; height: 14px; white-space: nowrap; }
.model li .nodeicon { margin-right: 2px; }
.hscroll { display: flex; align-items: center; height: 13px; background: #f0f0f0; }
.hscroll button { width: 13px; }
.hscroll svg { width: 13px; height: 13px; }
.thumb { width: 37px; height: 13px; margin-right: auto; background: #cdcdcd; }

.view { position: relative; min-width: 0; min-height: 0; overflow: hidden; border-left: 1px solid #777; border-top: 2px solid #888; background: #fefefe; }
.scene { position: absolute; inset: 0; width: 100%; height: 100%; stroke: none; }
.minor { stroke: #e6e6e6; }
.major { stroke: #d3d3d3; }
.box { stroke: #98444a; }
.scene text { font: 10px "Open Sans", sans-serif; fill: #111; }
.scene .axis { font-size: 9px; font-weight: 700; fill: #101050; }
.watermark { position: absolute; right: 53px; bottom: 14px; width: 190px; display: flex; flex-direction: column; color: #b4b4b4; font: 12px/17px Roboto, sans-serif; white-space: nowrap; }
.watermark strong { font: 400 15px/19px "Open Sans", sans-serif; }

.status { display: flex; align-items: center; gap: 3px; height: 17px; padding: 3px 1px 0 2px; color: #111; }
.status span { margin-right: auto; }
.status i { width: 24px; height: 13px; border: solid #999; border-width: 1px 0 0 1px; }
```
